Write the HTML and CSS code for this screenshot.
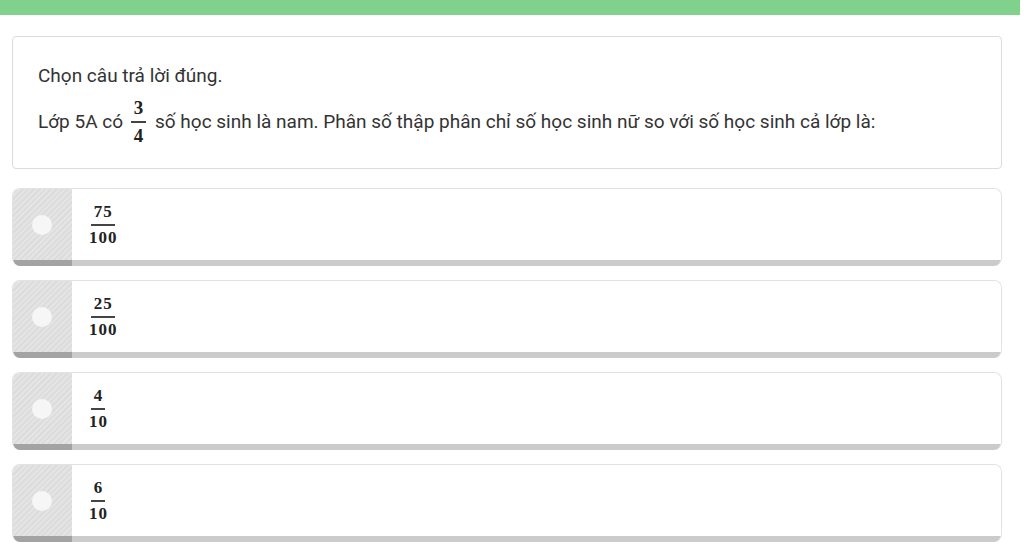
FILE: index.html
```html
<!DOCTYPE html>
<html lang="vi">
<head>
<meta charset="utf-8">
<link rel="stylesheet" href="styles.css">
</head>
<body>
<div class="topbar"></div>
<main class="wrap">
  <section class="question">
    <p class="line">Chọn câu trả lời đúng.</p>
    <p class="line line2">Lớp 5A có <span class="frac big"><span class="num">3</span><span class="den">4</span></span> số học sinh là nam. Phân số thập phân chỉ số học sinh nữ so với số học sinh cả lớp là:</p>
  </section>
  <section class="options">
    <div class="option"><div class="side"><span class="radio"></span></div><div class="body"><span class="frac"><span class="num">75</span><span class="den">100</span></span></div></div>
    <div class="option"><div class="side"><span class="radio"></span></div><div class="body"><span class="frac"><span class="num">25</span><span class="den">100</span></span></div></div>
    <div class="option"><div class="side"><span class="radio"></span></div><div class="body"><span class="frac"><span class="num">4</span><span class="den">10</span></span></div></div>
    <div class="option"><div class="side"><span class="radio"></span></div><div class="body"><span class="frac"><span class="num">6</span><span class="den">10</span></span></div></div>
  </section>
</main>
</body>
</html>
```
FILE: styles.css
```css
* { box-sizing: border-box; }
html, body { margin: 0; padding: 0; background: #fff; }
body {
  font-family: Roboto, "Liberation Sans", sans-serif;
  font-size: 19px;
  color: #333;
  width: 1024px;
  height: 548px;
  overflow: hidden;
}
.topbar {
  height: 15px;
  margin-right: 4px;
  background: #80d18c;
}
.wrap {
  padding: 21px 22px 0 12px;
}
.question {
  border: 1px solid #dcdcdc;
  border-radius: 4px;
  height: 133px;
  padding: 26px 25px 0 25px;
}
.line {
  margin: 0;
  line-height: 26px;
}
.line2 {
  margin-top: 9px;
  display: flex;
  align-items: center;
  white-space: pre;
}
.frac {
  display: inline-flex;
  flex-direction: column;
  align-items: center;
  font-family: "Liberation Serif", "DejaVu Serif", serif;
  font-weight: bold;
  font-size: 17px;
  letter-spacing: 1px;
  color: #222;
  line-height: 18px;
}
.frac.big { font-size: 19px; line-height: 20px; }
.line2 .frac { margin: 0 4px 0 3px; }
.num {
  padding: 0 2px 3px 3px;
  border-bottom: 2px solid #444;
}
.den { padding: 3px 2px 0 3px; }
.options {
  margin-top: 19px;
  display: flex;
  flex-direction: column;
  gap: 14px;
}
.option {
  display: flex;
  height: 78px;
  border: 1px solid #e2e2e2;
  border-bottom: none;
  border-radius: 8px;
  overflow: hidden;
}
.side {
  width: 59px;
  flex: none;
  display: flex;
  align-items: center;
  justify-content: center;
  padding-right: 2px;
  background:
    repeating-linear-gradient(135deg, #e4e4e4 0 2px, #dcdcdc 2px 4px);
  border-bottom: 6px solid #a3a3a3;
}
.radio {
  width: 20px;
  height: 20px;
  border-radius: 50%;
  background: #f6f6f6;
}
.body {
  flex: 1;
  display: flex;
  align-items: center;
  padding: 0 0 0 14px;
  background: #fff;
  border-bottom: 6px solid #cbcbcb;
}
```
